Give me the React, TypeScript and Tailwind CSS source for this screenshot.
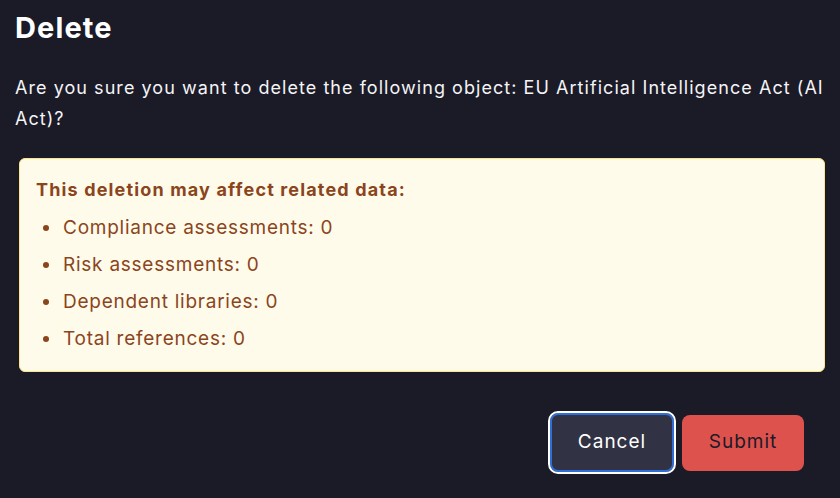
import React from "react";

const related = [
  "Compliance assessments: 0",
  "Risk assessments: 0",
  "Dependent libraries: 0",
  "Total references: 0",
];

const App = () => {
  return (
    <section
      className="w-[840px] h-[498px] bg-[#1b1a27] text-white overflow-hidden"
      style={{ fontFamily: "Inter, 'Noto Sans', sans-serif" }}
    >
      <div className="pl-[15px] pr-[15px] pt-[8px]">
        {/* HEADER */}
        <h1 className="text-[29px] leading-[40px] font-bold tracking-[1.1px]">Delete</h1>

        <p className="mt-[24px] text-[18px] leading-[31px] tracking-[1.05px] text-[#f4f4f6]">
          Are you sure you want to delete the following object: EU Artificial Intelligence Act (AI
          Act)?
        </p>

        {/* WARNING BOX */}
        <div className="mt-[24px] ml-1 rounded-md border border-[#fde68a] bg-[#fffbeb] pl-4 pr-4 pt-[17px] pb-[18px] text-[#8b451c]">
          <p className="text-[18px] leading-[28px] font-bold tracking-[1.15px]">
            This deletion may affect related data:
          </p>
          <ul className="mt-[10px] flex flex-col gap-[9px] pl-[26px] list-disc">
            {related.map((item) => (
              <li key={item} className="text-[19px] leading-[28px] tracking-[0.75px] pl-[1px]">
                {item}
              </li>
            ))}
          </ul>
        </div>

        {/* BUTTONS */}
        <div className="mt-[41px] pr-[21px] flex items-center justify-end gap-2">
          <button className="h-[59px] w-[124px] rounded-lg border-2 border-[#2f6fd6] outline-2 outline-white bg-[#313244] text-[19px] tracking-[1px] text-white">
            Cancel
          </button>
          <button className="h-[56px] w-[122px] rounded-lg bg-[#de524e] text-[19px] tracking-[1px] text-[#1b1a27]">
            Submit
          </button>
        </div>
      </div>
    </section>
  );
};

export default App;
